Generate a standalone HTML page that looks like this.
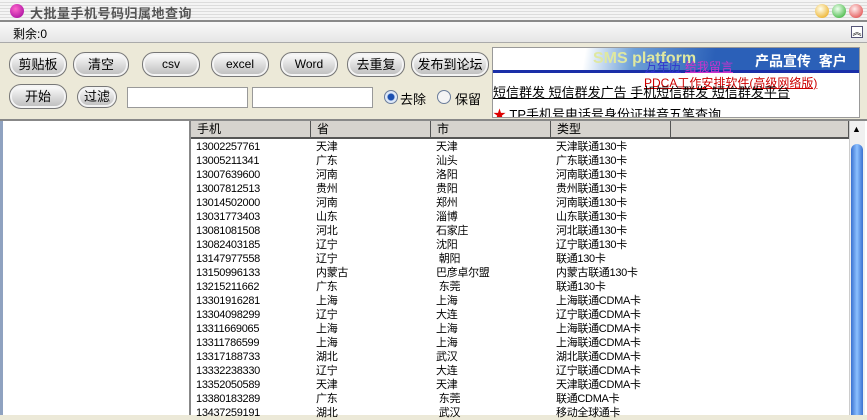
<!DOCTYPE html>
<html><head><meta charset="utf-8"><style>
*{margin:0;padding:0;box-sizing:border-box}
body{width:867px;height:415px;overflow:hidden;background:#ece9d8;font-family:"Liberation Sans","Noto Sans CJK SC",sans-serif;font-size:12px;position:relative;color:#000}
.abs{position:absolute}
.title{left:0;top:0;width:867px;height:22px;background:repeating-linear-gradient(#f4f4f4 0 2px,#dcdcdc 2px 3px);border-bottom:2px solid #8a8a8a}
.title b{position:absolute;left:30px;top:3px;font-size:13px;color:#555;letter-spacing:0.5px}
.dot{position:absolute;width:14px;height:14px;border-radius:50%;top:4px}
.menu{left:0;top:22px;width:867px;height:21px;background:linear-gradient(#fafafa,#e6e6e6);border-bottom:1px solid #aaa}
.btn{position:absolute;height:25px;border:1px solid #777;border-radius:12px;background:linear-gradient(#fff,#ddd 50%,#bbb);text-align:center;line-height:23px;font-size:13px;box-shadow:inset 0 0 0 2px #f4f4f4}
.inp{position:absolute;top:87px;height:21px;background:#fff;border:1px solid #999}
.radio{position:absolute;top:90px;width:14px;height:14px;border-radius:50%;border:1px solid #6a7c9a;background:#f4f4f4}
.list{left:0;top:119px;width:867px;height:296px;background:#fff;border-top:2px solid #888}
.hdr{position:absolute;top:121px;height:18px;background:#d6d3ce;border-bottom:2px solid #555;border-right:1px solid #555;font-size:12px;padding-left:6px;line-height:17px}
.row{position:absolute;left:196px;font-size:11px;line-height:14px;height:14px;white-space:nowrap}
.row span{position:absolute;letter-spacing:-0.3px}
</style></head><body>
<div class="abs title"><span class="dot" style="left:10px;background:radial-gradient(circle at 40% 35%,#f6c,#909)"></span><b>大批量手机号码归属地查询</b>
<span class="dot" style="left:815px;background:radial-gradient(circle at 40% 35%,#ffe,#e9a000)"></span>
<span class="dot" style="left:832px;background:radial-gradient(circle at 40% 35%,#efe,#2a2)"></span>
<span class="dot" style="left:849px;background:radial-gradient(circle at 40% 35%,#fee,#d33)"></span></div>
<div class="abs menu"><span style="position:absolute;left:13px;top:3px">剩余:0</span><span style="position:absolute;left:851px;top:4px;width:12px;height:12px;border:1px solid #557;font-size:9px;line-height:10px;text-align:center;background:#fff">︽</span></div>
<div class="btn" style="left:9px;top:52px;width:58px">剪贴板</div>
<div class="btn" style="left:73px;top:52px;width:56px">清空</div>
<div class="btn" style="left:142px;top:52px;width:58px;font-size:12px">csv</div>
<div class="btn" style="left:211px;top:52px;width:58px;font-size:12px">excel</div>
<div class="btn" style="left:280px;top:52px;width:58px;font-size:12px">Word</div>
<div class="btn" style="left:347px;top:52px;width:58px">去重复</div>
<div class="btn" style="left:411px;top:52px;width:78px">发布到论坛</div>
<div class="btn" style="left:9px;top:84px;width:58px">开始</div>
<div class="btn" style="left:77px;top:86px;width:40px;height:22px;line-height:20px">过滤</div>
<div class="inp" style="left:127px;width:121px"></div>
<div class="inp" style="left:252px;width:121px"></div>
<div class="radio" style="left:384px;background:radial-gradient(circle,#1a4fb0 0 3px,#dde8f8 4px)"></div><span class="abs" style="left:400px;top:89px;font-size:13px">去除</span>
<div class="radio" style="left:437px"></div><span class="abs" style="left:455px;top:89px;font-size:13px">保留</span>
<div class="abs" style="left:492px;top:47px;width:368px;height:71px;background:#fff;border:1px solid #999;overflow:hidden">
<div style="position:absolute;left:0;top:0;width:368px;height:25px;background:linear-gradient(100deg,#fff 25%,#6ea0d8 38%,#2b60b8 60%);border-bottom:3px solid #1a2fa8"></div>
<span style="position:absolute;left:100px;top:2px;font-size:16px;font-weight:bold;color:#dfe8a0">SMS platform</span>
<span style="position:absolute;left:262px;top:3px;font-size:14px;font-weight:bold;color:#fff">产品宣传 &nbsp;客户</span>
<span style="position:absolute;left:152px;top:10px;color:#33c;text-decoration:underline;font-size:12px">万年历</span><span style="position:absolute;left:192px;top:10px;color:#c3c;text-decoration:underline;font-size:12px">给我留言</span>
<span style="position:absolute;left:151px;top:26px;color:#c00;text-decoration:underline;font-size:12px">PDCA工作安排软件(高级网络版)</span>
<span style="position:absolute;left:0;top:34px;text-decoration:underline;font-size:13px">短信群发 短信群发广告 手机短信群发 短信群发平台</span>
<span style="position:absolute;left:0;top:56px;font-size:13px"><span style="color:#d00">★</span> TP手机号电话号身份证拼音五笔查询</span>
</div>
<div class="abs list"></div>
<div class="abs" style="left:0;top:121px;width:3px;height:294px;background:#8fa2c0"></div>
<div class="abs" style="left:189px;top:121px;width:2px;height:294px;background:#888"></div>
<div class="hdr" style="left:191px;width:120px">手机</div>
<div class="hdr" style="left:311px;width:120px">省</div>
<div class="hdr" style="left:431px;width:120px">市</div>
<div class="hdr" style="left:551px;width:120px">类型</div>
<div class="hdr" style="left:671px;width:178px"></div>
<div class="abs" style="left:849px;top:121px;width:16px;height:294px;background:#f0f0f0;border-left:1px solid #ccc"></div>
<div class="abs" style="left:852px;top:124px;font-size:9px">▲</div>
<div class="abs" style="left:851px;top:144px;width:12px;height:271px;border-radius:6px 6px 0 0;background:linear-gradient(90deg,#3a72d0,#8cc0ff 50%,#3a72d0)"></div>
<div id="rows"></div>
<script>
var d=[["13002257761","天津","天津","天津联通130卡"],["13005211341","广东","汕头","广东联通130卡"],["13007639600","河南","洛阳","河南联通130卡"],["13007812513","贵州","贵阳","贵州联通130卡"],["13014502000","河南","郑州","河南联通130卡"],["13031773403","山东","淄博","山东联通130卡"],["13081081508","河北","石家庄","河北联通130卡"],["13082403185","辽宁","沈阳","辽宁联通130卡"],["13147977558","辽宁"," 朝阳","联通130卡"],["13150996133","内蒙古","巴彦卓尔盟","内蒙古联通130卡"],["13215211662","广东"," 东莞","联通130卡"],["13301916281","上海","上海","上海联通CDMA卡"],["13304098299","辽宁","大连","辽宁联通CDMA卡"],["13311669065","上海","上海","上海联通CDMA卡"],["13311786599","上海","上海","上海联通CDMA卡"],["13317188733","湖北","武汉","湖北联通CDMA卡"],["13332238330","辽宁","大连","辽宁联通CDMA卡"],["13352050589","天津","天津","天津联通CDMA卡"],["13380183289","广东"," 东莞","联通CDMA卡"],["13437259191","湖北"," 武汉","移动全球通卡"]];
var h="";d.forEach(function(r,i){h+='<div class="row" style="top:'+(140+i*14)+'px"><span style="left:0">'+r[0]+'</span><span style="left:120px">'+r[1]+'</span><span style="left:240px;white-space:pre">'+r[2]+'</span><span style="left:360px">'+r[3]+'</span></div>'});
document.getElementById("rows").innerHTML=h;
</script>
</body></html>
